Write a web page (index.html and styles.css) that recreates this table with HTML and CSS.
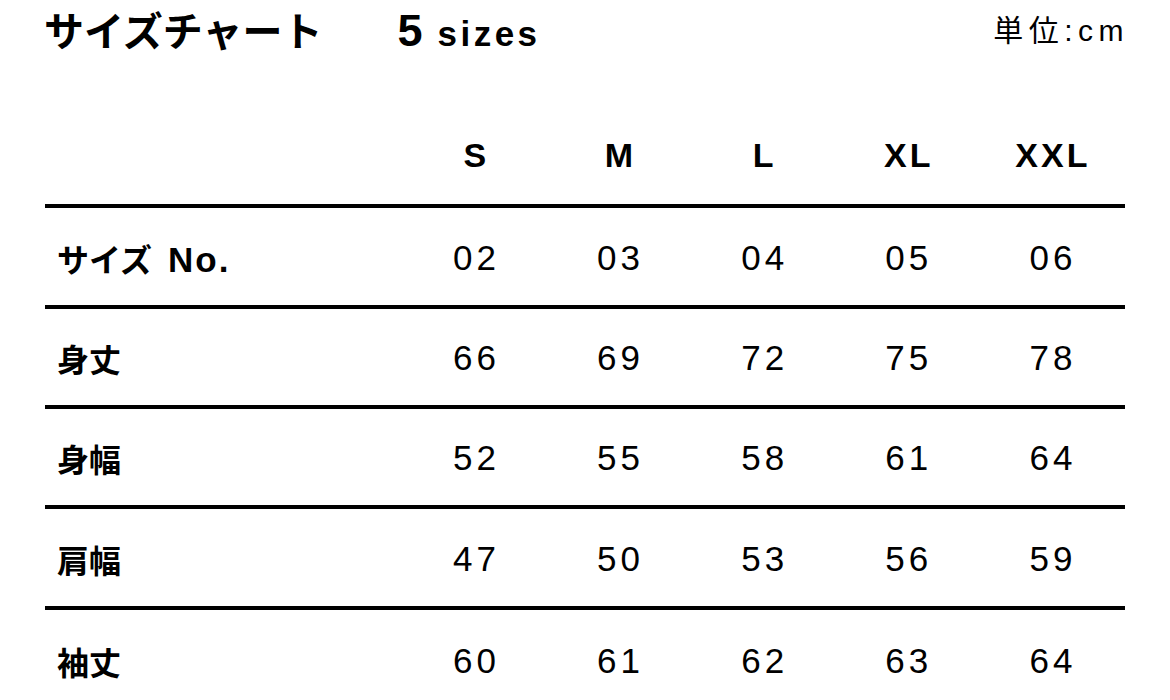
FILE: index.html
```html
<!DOCTYPE html>
<html lang="ja">
<head>
<meta charset="utf-8">
<title>サイズチャート</title>
<link rel="stylesheet" href="styles.css">
</head>
<body>
<div class="page">
  <header class="head">
    <h1 class="title"><span class="title-ja">サイズチャート</span><span class="title-num">5</span><span class="title-unit">sizes</span></h1>
    <div class="unit">単位:cm</div>
  </header>
  <table class="chart">
    <thead>
      <tr class="row-head">
        <th class="label"></th>
        <th>S</th><th>M</th><th>L</th><th>XL</th><th>XXL</th>
      </tr>
    </thead>
    <tbody>
      <tr><th class="label">サイズ<span class="latin">No.</span></th><td>02</td><td>03</td><td>04</td><td>05</td><td>06</td></tr>
      <tr><th class="label">身丈</th><td>66</td><td>69</td><td>72</td><td>75</td><td>78</td></tr>
      <tr><th class="label">身幅</th><td>52</td><td>55</td><td>58</td><td>61</td><td>64</td></tr>
      <tr><th class="label">肩幅</th><td>47</td><td>50</td><td>53</td><td>56</td><td>59</td></tr>
      <tr><th class="label">袖丈</th><td>60</td><td>61</td><td>62</td><td>63</td><td>64</td></tr>
    </tbody>
  </table>
</div>
</body>
</html>
```

FILE: styles.css
```css
html, body {
  margin: 0;
  padding: 0;
  background: #fff;
  color: #000;
}
body {
  font-family: "Liberation Sans", "Noto Sans CJK JP", Arial, sans-serif;
}
.page {
  width: 1080px;
  padding: 0 0 0 45px;
}
.head {
  display: flex;
  justify-content: space-between;
  align-items: flex-start;
  height: 105px;
  margin-left: -1px;
}
.title {
  margin: 5px 0 0 0;
  font-size: 40px;
  font-weight: 700;
  line-height: 48px;
  white-space: nowrap;
}
.title-ja {
  font-family: "Noto Sans CJK JP", sans-serif;
}
.title-num {
  margin-left: 75px;
  font-size: 45px;
}
.title-unit {
  margin-left: 15px;
  font-size: 35px;
  letter-spacing: 3.5px;
}
.unit {
  margin-top: 16px;
  margin-right: -4px;
  font-size: 30px;
  line-height: 1;
  letter-spacing: 5.5px;
}
.chart {
  border-collapse: collapse;
  table-layout: fixed;
  width: 1080px;
}
.chart th, .chart td {
  box-sizing: border-box;
  width: 144px;
  height: 101px;
  padding: 2px 0 0 0;
  text-align: center;
  vertical-align: middle;
}
.chart tr {
  border-bottom: 4px solid #000;
}
.chart tbody tr:nth-child(2),
.chart tbody tr:nth-child(3) th,
.chart tbody tr:nth-child(3) td {
  height: 100px;
}
.chart tbody tr:nth-child(2) th,
.chart tbody tr:nth-child(2) td {
  height: 100px;
}
.chart tbody tr:last-child {
  border-bottom: none;
}
.chart thead th {
  font-size: 34px;
  font-weight: 700;
  letter-spacing: 3px;
}
.chart th.label {
  width: 359px;
  text-align: left;
  padding-left: 12px;
  font-family: "Noto Sans CJK JP", sans-serif;
  font-size: 32px;
  font-weight: 700;
  letter-spacing: 0;
}
.chart th.label .latin {
  margin-left: 16px;
  font-family: "Liberation Sans", sans-serif;
  font-size: 35px;
  letter-spacing: 2px;
}
.chart td {
  font-size: 35px;
  font-weight: 400;
  letter-spacing: 4px;
}
```
